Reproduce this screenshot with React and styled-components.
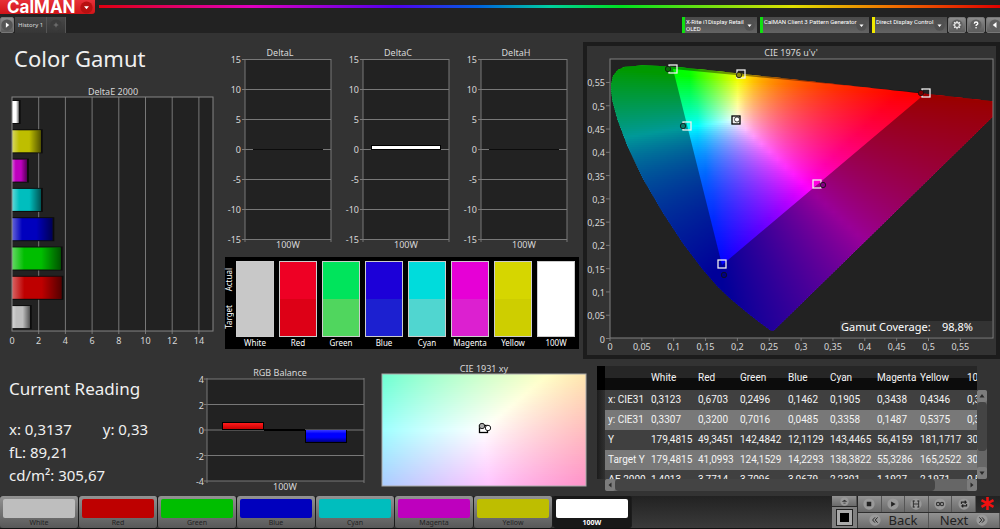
import React from 'react';
import styled, { createGlobalStyle, css } from 'styled-components';

const swatches = [
  { name: 'White', actual: '#c8c8c8', target: '#c8c8c8', button: '#bebebe' },
  { name: 'Red', actual: '#ee0024', target: '#dd0016', button: '#be0000' },
  { name: 'Green', actual: '#00e45c', target: '#50d65e', button: '#00be00' },
  { name: 'Blue', actual: '#1c00d8', target: '#1c20d0', button: '#0000be' },
  { name: 'Cyan', actual: '#00dcdc', target: '#50d6d0', button: '#00bebe' },
  { name: 'Magenta', actual: '#e600d6', target: '#dc20d0', button: '#be00be' },
  { name: 'Yellow', actual: '#d6d600', target: '#cece00', button: '#bebe00' },
  { name: '100W', actual: '#ffffff', target: '#ffffff', button: '#ffffff' },
];

const deltaE = [
  { name: 'w100', color: '#ffffff', value: 0.5 },
  { name: 'yellow', color: '#bebe00', value: 2.15 },
  { name: 'magenta', color: '#be00be', value: 1.12 },
  { name: 'cyan', color: '#00bebe', value: 2.16 },
  { name: 'blue', color: '#0000be', value: 3.02 },
  { name: 'green', color: '#00be00', value: 3.64 },
  { name: 'red', color: '#be0000', value: 3.7 },
  { name: 'white', color: '#bebebe', value: 1.33 },
];

const columns = [43, 47, 42, 48, 42, 47, 43, 47, 47];

const rows = [
  ['x: CIE31', '0,3123', '0,6703', '0,2496', '0,1462', '0,1905', '0,3438', '0,4346', '0,3137'],
  ['y: CIE31', '0,3307', '0,3200', '0,7016', '0,0485', '0,3358', '0,1487', '0,5375', '0,3300'],
  ['Y', '179,4815', '49,3451', '142,4842', '12,1129', '143,4465', '56,4159', '181,1717', '305,6700'],
  ['Target Y', '179,4815', '41,0993', '124,1529', '14,2293', '138,3822', '55,3286', '165,2522', '305,6700'],
  ['ΔE 2000', '1,4013', '3,7714', '3,7096', '3,0679', '2,2301', '1,1927', '2,1971', '0,5000'],
];

// CIE 1931 xy coordinates of the spectral locus, 380nm to 700nm
const locus = [
  [0.1741, 0.005], [0.1714, 0.0051], [0.1644, 0.0109], [0.1566, 0.0177],
  [0.144, 0.0297], [0.1355, 0.0399], [0.1241, 0.0578], [0.1096, 0.0868],
  [0.0913, 0.1327], [0.0687, 0.2007], [0.0454, 0.295], [0.0235, 0.4127],
  [0.0082, 0.5384], [0.0039, 0.6548], [0.0139, 0.7502], [0.0389, 0.812],
  [0.0743, 0.8338], [0.1547, 0.8059], [0.2296, 0.7543], [0.3016, 0.6923],
  [0.3731, 0.6245], [0.4441, 0.5547], [0.5125, 0.4866], [0.5752, 0.4242],
  [0.627, 0.3725], [0.6915, 0.3083], [0.7347, 0.2653],
];

const SRGB = [
  [3.2406, -1.5372, -0.4986],
  [-0.9689, 1.8758, 0.0415],
  [0.0557, -0.204, 1.057],
];

function xyToColor(x, y, gamma) {
  const xyz = [x / y, 1, (1 - x - y) / y];
  const lin = SRGB.map((row) =>
    Math.max(0, row[0] * xyz[0] + row[1] * xyz[1] + row[2] * xyz[2])
  );
  const max = Math.max(...lin);
  const rgb = lin.map((c) => Math.round(255 * Math.pow(c / max, 1 / gamma)));
  return `rgb(${rgb.join(',')})`;
}

function uvToColor(u, v) {
  const d = 6 * u - 16 * v + 12;
  return xyToColor((9 * u) / d, (4 * v) / d, 1.2);
}

// A two dimensional colour field, made of thin horizontal gradients
function ColorField({ id, x, y, width, height, colorAt }) {
  const step = 2;
  const stops = 48;
  const strips = [];
  for (let top = 0; top < height; top += step) strips.push(top);
  return (
    <g shapeRendering="crispEdges">
      {strips.map((top) => (
        <React.Fragment key={top}>
          <linearGradient id={`${id}${top}`}>
            {Array.from({ length: stops + 1 }, (_, i) => (
              <stop
                key={i}
                offset={i / stops}
                stopColor={colorAt(i / stops, (top + 1) / height)}
              />
            ))}
          </linearGradient>
          <rect
            x={x}
            y={y + top}
            width={width}
            height={Math.min(step + 1, height - top)}
            fill={`url(#${id}${top})`}
          />
        </React.Fragment>
      ))}
    </g>
  );
}

function DeltaEChart() {
  const px = (value) => 12 + value * 13.35;
  return (
    <Chart viewBox="0 0 225 264" role="img" aria-label="DeltaE 2000">
      <defs>
        <linearGradient id="sheen">
          <stop offset="0" stopColor="#fff" stopOpacity="0.4" />
          <stop offset="0.25" stopColor="#fff" stopOpacity="0" />
          <stop offset="0.6" stopColor="#000" stopOpacity="0" />
          <stop offset="1" stopColor="#000" stopOpacity="0.55" />
        </linearGradient>
      </defs>
      <text x="113" y="9" textAnchor="middle">DeltaE 2000</text>
      <rect x="12" y="11" width="201" height="234" fill="#222" />
      {[2, 4, 6, 8, 10, 12, 14].map((v) => (
        <line key={v} x1={px(v)} x2={px(v)} y1="11" y2="248" />
      ))}
      {deltaE.map((bar, i) => (
        <g key={bar.name}>
          <rect x="12" y={14 + i * 29.3} width={px(bar.value) - 10} height="24" fill="#0c0c0c" />
          <rect x="12" y={15 + i * 29.3} width={px(bar.value) - 12} height="22" fill={bar.color} />
          <rect x="12" y={15 + i * 29.3} width={px(bar.value) - 12} height="22" fill="url(#sheen)" />
        </g>
      ))}
      <rect x="12" y="11" width="201" height="234" fill="none" stroke="#858585" />
      {[0, 2, 4, 6, 8, 10, 12, 14].map((v) => (
        <text key={v} x={px(v)} y="258" textAnchor="middle">{v}</text>
      ))}
    </Chart>
  );
}

function DeltaChart({ title, value }) {
  return (
    <Chart viewBox="0 0 118 206" role="img" aria-label={title}>
      <text x="55" y="9" textAnchor="middle">{title}</text>
      <rect x="20" y="12" width="86" height="180" fill="#222" />
      {[15, 10, 5, 0, -5, -10, -15].map((v) => (
        <g key={v}>
          <line x1="17" x2="106" y1={102.5 - v * 6} y2={102.5 - v * 6} />
          <text x="16" y={106 - v * 6} textAnchor="end">{v}</text>
        </g>
      ))}
      <line x1="20" x2="20" y1="12" y2="195" />
      <line x1="106" x2="106" y1="12" y2="195" />
      {value ? (
        <>
          <rect x="28" y="98" width="70" height="5" fill="#000" />
          <rect x="29" y="99" width="68" height="3" fill="#fff" />
        </>
      ) : (
        <rect x="28" y="102" width="70" height="1" fill="#0c0c0c" />
      )}
      <text x="63" y="201" textAnchor="middle">100W</text>
    </Chart>
  );
}

function BalanceChart() {
  return (
    <Chart viewBox="0 0 184 132" role="img" aria-label="RGB Balance">
      <defs>
        <linearGradient id="balRed" x2="0" y2="1">
          <stop offset="0" stopColor="#ff1c1c" />
          <stop offset="1" stopColor="#c80000" />
        </linearGradient>
        <linearGradient id="balBlue" x2="0" y2="1">
          <stop offset="0" stopColor="#3c3cff" />
          <stop offset="0.3" stopColor="#0000ff" />
          <stop offset="0.6" stopColor="#0000ff" />
          <stop offset="1" stopColor="#000080" />
        </linearGradient>
      </defs>
      <text x="90" y="12" textAnchor="middle">RGB Balance</text>
      <rect x="17" y="15" width="157" height="102" fill="#222" />
      {[4, 2, 0, -2, -4].map((v) => (
        <g key={v}>
          <line x1="14" x2="174" y1={66 - v * 12.75} y2={66 - v * 12.75} />
          <text x="14" y={70 - v * 12.75} textAnchor="end">{v}</text>
        </g>
      ))}
      <line x1="17" x2="17" y1="14" y2="119" />
      <line x1="174" x2="174" y1="14" y2="119" />
      <rect x="32" y="58" width="42" height="8" fill="#000" />
      <rect x="33" y="59" width="40" height="6" fill="url(#balRed)" />
      <rect x="74" y="65" width="41" height="2" fill="#000" />
      <rect x="115" y="66" width="42" height="13" fill="#000" />
      <rect x="116" y="66" width="40" height="12" fill="url(#balBlue)" />
      <text x="95" y="126" textAnchor="middle">100W</text>
    </Chart>
  );
}

function ChromaticityChart() {
  // plot area of the u'v' diagram
  const px = (u) => 23 + u * 637;
  const py = (v) => 292.5 - v * 465.5;
  const outline = `M${locus
    .map(([x, y]) => {
      const d = -2 * x + 12 * y + 3;
      return `${px((4 * x) / d).toFixed(1)} ${py((9 * y) / d).toFixed(1)}`;
    })
    .join('L')}Z`;
  const label = (n) => String(n / 100).replace('.', ',');
  const points = [
    { at: [86, 23], dot: [81, 23], fill: '#0a6a0a' },
    { at: [154, 28], dot: [152, 29], fill: '#8a8a10' },
    { at: [339, 47], dot: [334, 47], fill: '#7a0000' },
    { at: [100, 80], dot: [96, 80], fill: '#0a7a6a' },
    { at: [230, 138], dot: [236, 139], fill: '#800080' },
    { at: [135, 218], dot: [137, 229], fill: '#000080' },
  ];
  return (
    <Chart viewBox="0 0 409 309" role="img" aria-label="CIE 1976 u'v'">
      <defs>
        <clipPath id="plot"><rect x="23" y="13" width="383" height="279" /></clipPath>
        <clipPath id="locus"><path d={outline} /></clipPath>
      </defs>
      <text x="204" y="10" textAnchor="middle">CIE 1976 u'v'</text>
      <rect x="23" y="13" width="383" height="279" fill="#222" />
      <g clipPath="url(#plot)">
        <g clipPath="url(#locus)">
          <ColorField
            id="uv"
            x={23}
            y={13}
            width={383}
            height={279}
            colorAt={(i, j) => uvToColor((i * 383) / 637, ((1 - j) * 279) / 465.5)}
          />
        </g>
        <path d={`${outline}M339 47L86 23L135 219Z`} fillRule="evenodd" fill="#000" fillOpacity="0.4" />
      </g>
      {points.map((p) => (
        <g key={p.fill}>
          <rect x={p.at[0] - 4} y={p.at[1] - 4} width="8" height="8" fill="none" stroke="#eee" strokeWidth="1.3" />
          <circle cx={p.dot[0]} cy={p.dot[1]} r="2.7" fill={p.fill} stroke="#111" strokeWidth="0.8" />
        </g>
      ))}
      <rect x="145" y="70" width="8" height="8" fill="#eee" stroke="#000" strokeWidth="1.3" />
      <circle cx="150" cy="73.5" r="2.5" fill="#fff" stroke="#000" strokeWidth="0.7" />
      <rect x="253" y="275" width="152" height="16" fill="#333" />
      <text className="coverage" x="254" y="285">Gamut Coverage:</text>
      <text className="coverage" x="386" y="285" textAnchor="end">98,8%</text>
      <rect x="23" y="13" width="383" height="279" fill="none" stroke="#808080" />
      {Array.from({ length: 12 }, (_, i) => (
        <g key={i}>
          <line x1="19" x2="23" y1={py(i / 20)} y2={py(i / 20)} />
          <text x="18" y={py(i / 20) + 4} textAnchor="end">{label(i * 5)}</text>
          <line x1={px(i / 20)} x2={px(i / 20)} y1="292" y2="295" />
          <text x={px(i / 20)} y="304" textAnchor="middle">{label(i * 5)}</text>
        </g>
      ))}
    </Chart>
  );
}

function XyChart() {
  return (
    <Chart viewBox="0 5 220 126" role="img" aria-label="CIE 1931 xy">
      <text x="110" y="13" textAnchor="middle">CIE 1931 xy</text>
      <ColorField
        id="xy"
        x={8}
        y={15}
        width={204}
        height={112}
        colorAt={(i, j) => xyToColor(0.26 + i * 0.106, 0.385 - j * 0.113, 2.2)}
      />
      <rect x="8" y="15" width="204" height="112" fill="none" stroke="#aaa" />
      <rect x="105.5" y="66.5" width="8" height="7" fill="#fff" stroke="#000" strokeWidth="1.3" />
      <circle cx="108" cy="67" r="2.7" fill="#aaa" stroke="#222" />
      <circle cx="114" cy="69" r="2.7" fill="#fff" stroke="#222" />
    </Chart>
  );
}

const icons = {
  down: <path d="M5 6.5h6L8 10z" fill="#fff" />,
  right: <path d="M6.5 4.5v7L11 8z" fill="#fff" />,
  left: <path d="M10 4v8L5 8z" fill="#fff" />,
  plus: <path d="M8 5v6M5 8h6" stroke="#888" />,
  gear: (
    <g fill="none" stroke="#eee">
      <circle cx="8" cy="8" r="3.2" strokeWidth="1.4" />
      <path d="M8 2.5v2M8 11.5v2M2.5 8h2M11.5 8h2M4.2 4.2l1.3 1.3M10.5 10.5l1.3 1.3M4.2 11.8l1.3-1.3M10.5 5.5l1.3-1.3" strokeWidth="1.6" />
    </g>
  ),
  help: (
    <g>
      <path d="M5.8 6.2q0-2.2 2.3-2.2t2.3 1.9q0 1-1.2 1.7T8.1 9.3" fill="none" stroke="#fff" strokeWidth="1.8" />
      <circle cx="8.1" cy="11.7" r="1.1" fill="#fff" />
    </g>
  ),
  eye: <path d="M3 8.5L8 5l5 3.5zM6 10h4v1.5H6z" fill="#333" />,
  stop: <path d="M5 5h6v6H5z" fill="#222" />,
  play: <path d="M5.5 4.5v7L11.5 8z" fill="#222" />,
  save: <path d="M4.5 3.5v9M11.5 3.5v9M4.5 8h7M3.5 4h3M9.5 4h3M3.5 12h3M9.5 12h3" fill="none" stroke="#2a2a2a" strokeWidth="1.2" />,
  loop: (
    <g fill="none" stroke="#333" strokeWidth="1.4">
      <circle cx="5.4" cy="8" r="2.2" />
      <circle cx="10.6" cy="8" r="2.2" />
    </g>
  ),
  refresh: <path d="M4.5 8V5.5h6M9 3.5l2 2-2 2M11.5 8v2.5h-6M7 12.5l-2-2 2-2" fill="none" stroke="#222" strokeWidth="1.4" />,
  back: <path d="M8 4.5L4.8 8 8 11.5M11.5 4.5L8.3 8l3.2 3.5" fill="none" stroke="#222" strokeWidth="1.3" />,
  next: <path d="M8 4.5L11.2 8 8 11.5M4.5 4.5L7.7 8l-3.2 3.5" fill="none" stroke="#222" strokeWidth="1.3" />,
  scrollUp: <path d="M3 11h10L8 4z" fill="#2a2a2a" />,
  scrollDown: <path d="M3 5h10l-5 7z" fill="#2a2a2a" />,
  scrollLeft: <path d="M11 3v10L5 8z" fill="#2a2a2a" />,
  scrollRight: <path d="M5 3v10l6-5z" fill="#2a2a2a" />,
};

function Icon({ name, size = 12, disc }) {
  return (
    <svg width={size} height={size} viewBox="0 0 16 16" aria-hidden="true">
      {disc && <circle cx="8" cy="8" r="7.5" fill={disc} />}
      {icons[name]}
    </svg>
  );
}

function App() {
  return (
    <Page>
      <GlobalStyle />
      <Header>
        <Logo type="button">
          <span>CalMAN</span>
          <Icon name="down" size={13} disc="#b81010" />
        </Logo>
        <Spectrum />
      </Header>

      <TabBar>
        <SquareButton aria-label="Expand"><Icon name="right" disc="#555" /></SquareButton>
        <Tab>History 1</Tab>
        <Tab aria-label="Add history"><Icon name="plus" disc="#3c3c3c" /></Tab>
        <Devices>
          <Device $width={75} $color="#10e010">
            <span>X-Rite i1Display Retail<br />OLED</span>
            <Icon name="down" size={11} disc="#505050" />
          </Device>
          <Device $width={109} $color="#10e010">
            <span>CalMAN Client 3 Pattern Generator</span>
            <Icon name="down" size={11} disc="#505050" />
          </Device>
          <Device $width={75} $color="#f0e800">
            <span>Direct Display Control</span>
            <Icon name="down" size={11} disc="#505050" />
          </Device>
        </Devices>
        <Tools>
          <SquareButton aria-label="Settings"><Icon name="gear" disc="#606060" /></SquareButton>
          <SquareButton aria-label="Help"><Icon name="help" disc="#606060" /></SquareButton>
          <SquareButton aria-label="Collapse"><Icon name="left" disc="#606060" /></SquareButton>
        </Tools>
      </TabBar>

      <Upper>
        <section>
          <Title>Color Gamut</Title>
          <DeltaEChart />
        </section>
        <Middle>
          <DeltaRow>
            <DeltaChart title="DeltaL" />
            <DeltaChart title="DeltaC" value={0.5} />
            <DeltaChart title="DeltaH" />
          </DeltaRow>
          <SwatchPanel>
            <SideLabels>
              <span>Actual</span>
              <span>Target</span>
            </SideLabels>
            {swatches.map((s) => (
              <Swatch key={s.name}>
                <SwatchColor $actual={s.actual} $target={s.target} />
                <figcaption>{s.name}</figcaption>
              </Swatch>
            ))}
          </SwatchPanel>
        </Middle>
        <GamutPanel>
          <ChromaticityChart />
        </GamutPanel>
      </Upper>

      <Lower>
        <Reading>
          <h2>Current Reading</h2>
          <p><span>x: 0,3137</span><span>y: 0,33</span></p>
          <p>fL: 89,21</p>
          <p>cd/m²: 305,67</p>
        </Reading>
        <BalanceChart />
        <XyChart />
        <TablePanel>
          <TableView>
            <Table>
              <colgroup>
                <col style={{ width: 8 }} />
                {columns.map((w, i) => <col key={i} style={{ width: w }} />)}
              </colgroup>
              <thead>
                <tr>
                  <th />
                  <th />
                  {swatches.map((s) => <th key={s.name} scope="col">{s.name}</th>)}
                </tr>
              </thead>
              <tbody>
                {rows.map((row) => (
                  <tr key={row[0]}>
                    <td />
                    <th scope="row">{row[0]}</th>
                    {row.slice(1).map((cell, i) => <td key={i}>{cell}</td>)}
                  </tr>
                ))}
              </tbody>
            </Table>
          </TableView>
          <VScroll>
            <ScrollButton aria-label="Scroll up"><Icon name="scrollUp" size={8} /></ScrollButton>
            <Thumb $grow={3} />
            <Gap $grow={1} />
            <ScrollButton aria-label="Scroll down"><Icon name="scrollDown" size={8} /></ScrollButton>
          </VScroll>
          <HScroll>
            <ScrollButton aria-label="Scroll left"><Icon name="scrollLeft" size={8} /></ScrollButton>
            <Thumb $grow={10} />
            <Gap $grow={1} />
            <ScrollButton aria-label="Scroll right"><Icon name="scrollRight" size={8} /></ScrollButton>
          </HScroll>
        </TablePanel>
      </Lower>

      <Footer>
        {swatches.map((s) => (
          <PatternButton key={s.name} $color={s.button} $active={s.name === '100W'}>
            <i />
            <span>{s.name}</span>
          </PatternButton>
        ))}
        <Controls>
          <Monitor>
            <ControlButton aria-label="Show"><Icon name="eye" size={9} disc="#999" /></ControlButton>
            <WindowButton aria-label="Window"><i /></WindowButton>
          </Monitor>
          <Transport>
            <div>
              <ControlButton aria-label="Stop"><Icon name="stop" disc="#999" /></ControlButton>
              <ControlButton aria-label="Play"><Icon name="play" disc="#999" /></ControlButton>
              <ControlButton aria-label="Save"><Icon name="save" disc="#999" /></ControlButton>
              <ControlButton aria-label="Loop"><Icon name="loop" disc="#999" /></ControlButton>
              <ControlButton aria-label="Refresh"><Icon name="refresh" disc="#999" /></ControlButton>
              <Asterisk>
                <svg width="15" height="15" viewBox="0 0 15 15" aria-hidden="true">
                  <path d="M7.5 1v13M1.5 4.2l12 6.6M13.5 4.2l-12 6.6" stroke="#f01010" strokeWidth="2.6" />
                </svg>
              </Asterisk>
            </div>
            <div>
              <ControlButton><Icon name="back" disc="#999" />Back</ControlButton>
              <ControlButton>Next<Icon name="next" disc="#999" /></ControlButton>
            </div>
          </Transport>
        </Controls>
      </Footer>
    </Page>
  );
}

const GlobalStyle = createGlobalStyle`
  * {
    box-sizing: border-box;
  }

  body {
    margin: 0;
    background: #333;
    color: #f0f0f0;
    font-family: 'Noto Sans', sans-serif;
  }

  button {
    border: 0;
    padding: 0;
    color: inherit;
    font-family: inherit;
  }

  svg {
    flex: none;
  }
`;

const Page = styled.main`
  min-height: 100vh;
  display: flex;
  flex-direction: column;
  overflow: hidden;
`;

const Header = styled.header`
  height: 17px;
  display: flex;
  gap: 4px;
  background: #222;
`;

const Logo = styled.button`
  width: 95px;
  height: 14px;
  display: flex;
  align-items: center;
  justify-content: space-between;
  padding: 0 2px 0 7px;
  border-radius: 0 0 3px 0;
  background: linear-gradient(#e83038, #d01418);
  color: #fff;
  font: 700 17px/14px Inter, sans-serif;
`;

const Spectrum = styled.div`
  flex: 1;
  height: 3px;
  margin-top: 5px;
  background: linear-gradient(
    90deg,
    #e00010,
    #e000c0 17%,
    #5000f0 33%,
    #0060e0 42%,
    #00d0a0 50%,
    #00e020 58%,
    #e0e000 77%,
    #f07000 88%,
    #e00000
  );
`;

const TabBar = styled.nav`
  height: 16px;
  display: flex;
  background: #222;
`;

const SquareButton = styled.button`
  width: 18px;
  flex: none;
  display: grid;
  place-items: center;
  overflow: hidden;
  border: 1px solid #777;
  border-radius: 2px;
  background: linear-gradient(#8c8c8c, #5c5c5c);

  ${TabBar} > & {
    width: 14px;
    margin-right: 1px;
  }
`;

const Tab = styled.button`
  display: flex;
  align-items: center;
  padding: 0 3px;
  border-right: 1px solid #555;
  background: linear-gradient(#484848, #363636);
  color: #ddd;
  font-size: 6px;
`;

const Devices = styled.div`
  flex: 1;
  display: flex;
  justify-content: flex-end;
  gap: 3px;
`;

const Device = styled.button`
  width: ${({ $width }) => $width}px;
  display: flex;
  align-items: center;
  justify-content: space-between;
  padding: 0 2px 0 1px;
  border-left: 3px solid ${({ $color }) => $color};
  background: linear-gradient(#4a4a4a, #646464);
  color: #fff;
  font: 6px/7px Roboto, sans-serif;
  text-align: left;
  white-space: nowrap;

  span {
    align-self: flex-start;
    min-width: 0;
    padding-top: 1px;
  }
`;

const Tools = styled.div`
  display: flex;
  gap: 1px;
  width: 53px;
  padding-left: 1px;
  overflow: hidden;
`;

const Upper = styled.div`
  display: grid;
  grid-template-columns: 225fr 358fr 417fr;
  padding-top: 9px;
`;

const Title = styled.h1`
  margin: 0;
  padding: 0 14px;
  height: 44px;
  font: 400 22px/32px 'Noto Sans', sans-serif;
`;

const Chart = styled.svg`
  display: block;
  width: 100%;
  height: auto;

  text {
    fill: #d8d8d8;
    font: 9px 'Noto Sans', sans-serif;
  }

  .coverage {
    fill: #fff;
    font-size: 11px;
  }

  line {
    stroke: #787878;
  }
`;

const Middle = styled.section`
  padding: 5px 4px 0 0;
`;

const DeltaRow = styled.div`
  display: grid;
  grid-template-columns: repeat(3, 1fr);
`;

const SwatchPanel = styled.div`
  display: flex;
  gap: 5px;
  height: 92px;
  margin-top: 4px;
  padding: 4px 4px 0 1px;
  background: #000;
`;

const SideLabels = styled.div`
  width: 5px;
  height: 75px;
  display: flex;
  flex-direction: column;
  justify-content: space-around;
  align-items: center;
  color: #fff;
  font-size: 8px;
  line-height: 10px;

  span {
    writing-mode: vertical-rl;
    transform: rotate(180deg);
  }
`;

const Swatch = styled.figure`
  flex: 1;
  min-width: 0;
  margin: 0;
  text-align: center;

  figcaption {
    margin: 0 -4px;
    color: #fff;
    font-size: 8px;
    line-height: 12px;
  }
`;

const SwatchColor = styled.div`
  height: 76px;
  border: 1px solid #ccc;
  background: linear-gradient(
    ${({ $actual }) => $actual} 50%,
    ${({ $target }) => $target} 50%
  );
`;

const GamutPanel = styled.section`
  align-self: start;
  border: 4px solid #1c1c1c;
  background: #333;
`;

const Lower = styled.div`
  flex: 1;
  display: grid;
  grid-template-columns: 190fr 184fr 220fr 406fr;
  align-items: start;
  padding-top: 5px;
`;

const Reading = styled.section`
  padding: 13px 0 0 9px;

  h2 {
    margin: 0 0 17px;
    font: 400 17px/24px 'Noto Sans', sans-serif;
    white-space: nowrap;
  }

  p {
    display: flex;
    gap: 31px;
    margin: 0;
    font-size: 15px;
    line-height: 23px;
    white-space: nowrap;
  }
`;

const TablePanel = styled.section`
  display: grid;
  grid-template-columns: minmax(0, 1fr) 10px;
  margin: 2px 13px 0 3px;
`;

const TableView = styled.div`
  height: 113px;
  overflow: hidden;
`;

const Table = styled.table`
  width: 414px;
  table-layout: fixed;
  border-collapse: collapse;
  color: #f4f4f4;
  font: 10px/20px Roboto, sans-serif;

  th,
  td {
    height: 20px;
    padding: 0 0 0 3px;
    font-weight: 400;
    text-align: left;
    white-space: nowrap;
  }

  thead th {
    height: 24px;
    background: linear-gradient(#262626 50%, #0c0c0c 50%);
  }

  tbody tr {
    background: #404040;
  }

  tbody tr:nth-child(even) {
    background: #787878;
  }

  td:first-child {
    background: linear-gradient(90deg, #1c1c1c, #303030);
  }

  thead th:first-child {
    background: #000;
  }
`;

const scrollTrack = css`
  display: flex;
  border-radius: 3px;
  background: #666;
`;

const VScroll = styled.div`
  ${scrollTrack}
  flex-direction: column;
  margin-top: 24px;
`;

const HScroll = styled.div`
  ${scrollTrack}
  height: 12px;
  margin-left: 8px;
`;

const ScrollButton = styled.button`
  width: 10px;
  height: 12px;
  flex: none;
  display: grid;
  place-items: center;
  border-radius: 2px;
  background: #7c7c7c;
`;

const Thumb = styled.div`
  flex: ${({ $grow }) => $grow};
  border-radius: 4px;
  background: #444;
`;

const Gap = styled.div`
  flex: ${({ $grow }) => $grow};
`;

const Footer = styled.footer`
  height: 33px;
  display: flex;
  border-bottom: 1px solid #111;
  background: linear-gradient(#222, #3a3a3a);
`;

const PatternButton = styled.button`
  flex: 0 1 79px;
  display: flex;
  flex-direction: column;
  padding: 3px 3px 0;
  border-right: 1px solid #1c1c1c;
  border-radius: 3px;
  background: ${({ $active }) => ($active ? '#181818' : 'linear-gradient(#929292, #585858)')};
  color: ${({ $active }) => ($active ? '#fff' : '#222')};
  font: ${({ $active }) => ($active ? 700 : 400)} 7px/10px 'Noto Sans', sans-serif;
  text-align: center;

  i {
    align-self: stretch;
    height: 19px;
    border-radius: 2px;
    background: ${({ $color }) => $color};
  }

  span {
    align-self: center;
  }
`;

const Controls = styled.div`
  display: flex;
  gap: 1px;
  width: 168px;
  margin-left: auto;
`;

const ControlButton = styled.button`
  flex: 1;
  min-width: 0;
  display: flex;
  align-items: center;
  justify-content: center;
  gap: 8px;
  border-right: 1px solid #555;
  background: linear-gradient(#929292, #6a6a6a);
  color: #222;
  font-size: 13px;
  line-height: 15px;
`;

const Monitor = styled.div`
  width: 25px;
  display: flex;
  flex-direction: column;
  gap: 1px;
`;

const WindowButton = styled.button`
  height: 21px;
  display: grid;
  place-items: center;
  background: #808080;

  i {
    width: 15px;
    height: 15px;
    border: 3px solid #aaa;
    outline: 1px solid #222;
    background: #000;
  }
`;

const Transport = styled.div`
  flex: 1;
  display: flex;
  flex-direction: column;
  gap: 1px;

  > div {
    flex: 1;
    display: flex;
  }
`;

const Asterisk = styled.span`
  width: 24px;
  display: grid;
  place-items: center;
`;

export default App;
